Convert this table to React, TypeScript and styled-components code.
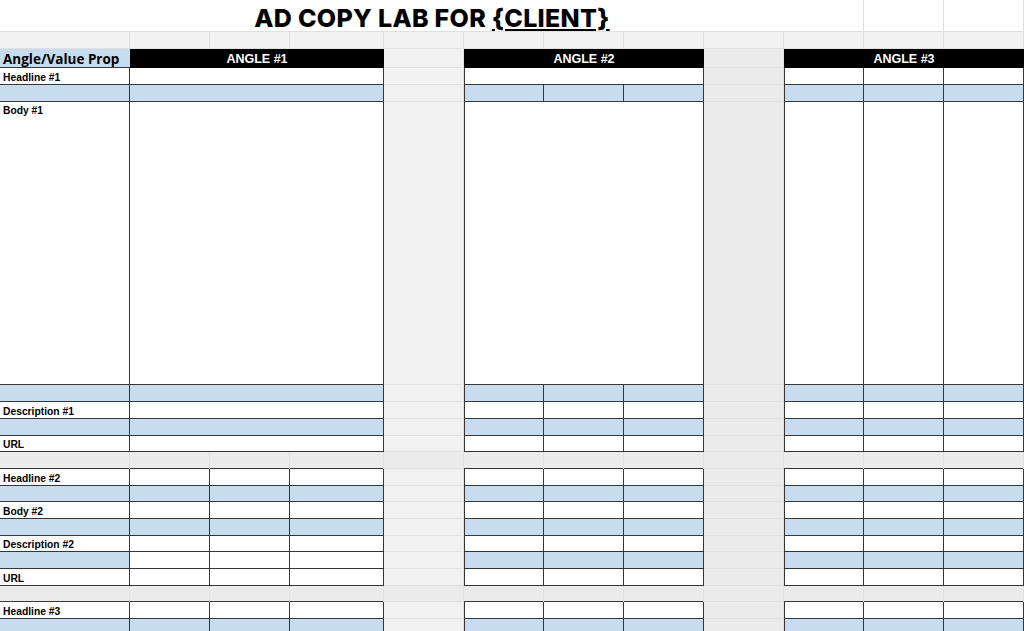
import styled, { createGlobalStyle } from "styled-components";

const GlobalStyle = createGlobalStyle`
    html, body {
        margin: 0;
        padding: 0;
        background: #fff;
        overflow: hidden;
    }
    body {
        font-family: "Liberation Sans", Arial, sans-serif;
    }
`;

const DARK = "#363636";
const LIGHT = "#e0e0e0";
const BLUE = "#c8dcf0";

// 열 너비 / 행 높이 (스프레드시트 그대로)
const COLS = [130, 80, 80, 94, 80, 80, 80, 80, 80, 80, 80, 80];
const ROWS = [
    32, 17, 19, 17, 17, 283, 17, 17, 17, 16, 17, 17, 16, 17, 17, 16, 17, 17,
    16, 17, 17,
];

const Sheet = styled.div`
    display: grid;
    grid-template-columns: ${COLS.map((c) => `${c}px`).join(" ")};
    grid-template-rows: ${ROWS.map((r) => `${r}px`).join(" ")};
    width: 1024px;
    height: 631px;
    overflow: hidden;
    background: #fff;
`;

const BaseCell = styled.div<{ $span?: number }>`
    grid-column: span ${(p) => p.$span ?? 1};
    min-width: 0;
    overflow: hidden;
    display: flex;
    align-items: center;
    box-sizing: border-box;
`;

const PlainCell = styled(BaseCell)<{ $bg?: string }>`
    background: ${(p) => p.$bg ?? "#fff"};
    box-shadow: inset -1px -1px 0 ${LIGHT};
`;

const TitleCell = styled(BaseCell)`
    justify-content: center;
    padding-top: 3px;
    box-shadow: inset -1px -1px 0 ${LIGHT};
`;

const Title = styled.h1`
    margin: 0;
    font-family: Inter, "Open Sans", sans-serif;
    font-weight: 800;
    font-size: 25px;
    letter-spacing: 0.3px;
    color: #000;
    white-space: nowrap;

    u {
        text-decoration-thickness: 1.5px;
        text-underline-offset: 2px;
    }
`;

// 앵글 헤더 (검정 바)
const HeadCell = styled(BaseCell)`
    background: #000;
    color: #fff;
    justify-content: center;
    font-size: 12.5px;
    font-weight: bold;
    padding-top: 1px;
`;

const PropCell = styled(BaseCell)`
    background: ${BLUE};
    box-shadow: inset 0 -1px 0 ${DARK};
    padding-left: 3px;
    font-family: "Open Sans", sans-serif;
    font-weight: 700;
    font-size: 13.5px;
    color: #000;
    white-space: nowrap;
`;

const LabelCell = styled(BaseCell)<{ $blue?: boolean; $top?: boolean }>`
    background: ${(p) => (p.$blue ? BLUE : "#fff")};
    box-shadow: inset -1px -1px 0 ${DARK};
    align-items: ${(p) => (p.$top ? "flex-start" : "center")};
    padding: ${(p) => (p.$top ? "3px 0 0 3px" : "1px 0 0 3px")};
    font-size: 10.3px;
    font-weight: bold;
    color: #000;
    white-space: nowrap;
`;

const TableCell = styled(BaseCell)<{ $blue?: boolean; $lead?: boolean }>`
    background: ${(p) => (p.$blue ? BLUE : "#fff")};
    box-shadow: inset -1px -1px 0 ${DARK}
        ${(p) => (p.$lead ? `, inset 1px 0 0 ${DARK}` : "")};
`;

// 세로 여백 열 (E, I)
const GapCell = styled(BaseCell)<{ $tone: "e" | "i" }>`
    background: ${(p) => (p.$tone === "e" ? "#f1f1f1" : "#ebebeb")};
    box-shadow: inset -1px -1px 0 ${LIGHT};
`;

// 가로 여백 행
const BandCell = styled(BaseCell)<{ $edge?: boolean }>`
    background: #ebebeb;
    box-shadow: inset -1px 0 0 ${LIGHT},
        inset 0 -1px 0 ${(p) => (p.$edge ? DARK : LIGHT)};
`;

type Fill = "w" | "b";
type RowSpec = {
    label?: string;
    labelFill: Fill;
    a1: Fill[];
    a2: Fill[];
    a3: Fill[];
    top?: boolean;
};

const AdRow = ({ spec }: { spec: RowSpec }) => (
    <>
        <LabelCell $blue={spec.labelFill === "b"} $top={spec.top}>
            {spec.label}
        </LabelCell>
        {spec.a1.map((f, i) => (
            <TableCell
                key={`a${i}`}
                $blue={f === "b"}
                $span={spec.a1.length === 1 ? 3 : 1}
            />
        ))}
        <GapCell $tone='e' />
        {spec.a2.map((f, i) => (
            <TableCell
                key={`b${i}`}
                $blue={f === "b"}
                $span={spec.a2.length === 1 ? 3 : 1}
                $lead={i === 0}
            />
        ))}
        <GapCell $tone='i' />
        {spec.a3.map((f, i) => (
            <TableCell key={`c${i}`} $blue={f === "b"} $lead={i === 0} />
        ))}
    </>
);

const BandRow = () => (
    <>
        {COLS.map((_, i) => (
            <BandCell key={i} $edge={i !== 4 && i !== 8} />
        ))}
    </>
);

const W3: Fill[] = ["w", "w", "w"];
const B3: Fill[] = ["b", "b", "b"];

const firstBlock: RowSpec[] = [
    { label: "Headline #1", labelFill: "w", a1: ["w"], a2: ["w"], a3: W3 },
    { labelFill: "b", a1: ["b"], a2: B3, a3: B3 },
    { label: "Body #1", labelFill: "w", a1: ["w"], a2: ["w"], a3: W3, top: true },
    { labelFill: "b", a1: ["b"], a2: B3, a3: B3 },
    { label: "Description #1", labelFill: "w", a1: ["w"], a2: W3, a3: W3 },
    { labelFill: "b", a1: ["b"], a2: B3, a3: B3 },
    { label: "URL", labelFill: "w", a1: ["w"], a2: W3, a3: W3 },
];

const secondBlock: RowSpec[] = [
    { label: "Headline #2", labelFill: "w", a1: W3, a2: W3, a3: W3 },
    { labelFill: "b", a1: B3, a2: B3, a3: B3 },
    { label: "Body #2", labelFill: "w", a1: W3, a2: W3, a3: W3 },
    { labelFill: "b", a1: B3, a2: B3, a3: B3 },
    { label: "Description #2", labelFill: "w", a1: W3, a2: W3, a3: W3 },
    { labelFill: "b", a1: W3, a2: B3, a3: B3 },
    { label: "URL", labelFill: "w", a1: W3, a2: W3, a3: W3 },
];

const thirdBlock: RowSpec[] = [
    { label: "Headline #3", labelFill: "w", a1: W3, a2: W3, a3: W3 },
    { labelFill: "b", a1: B3, a2: B3, a3: B3 },
];

const App = () => {
    return (
        <>
            <GlobalStyle />
            <Sheet>
                {/* 제목 행 */}
                <TitleCell $span={10}>
                    <Title>
                        AD COPY LAB FOR <u>{"{CLIENT}"}</u>
                    </Title>
                </TitleCell>
                <PlainCell />
                <PlainCell />

                {/* 빈 회색 행 */}
                {COLS.map((_, i) => (
                    <PlainCell key={`g${i}`} $bg='#f1f1f1' />
                ))}

                {/* 앵글 헤더 */}
                <PropCell>Angle/Value Prop</PropCell>
                <HeadCell $span={3}>ANGLE #1</HeadCell>
                <GapCell $tone='e' />
                <HeadCell $span={3}>ANGLE #2</HeadCell>
                <GapCell $tone='i' />
                <HeadCell $span={3}>ANGLE #3</HeadCell>

                {firstBlock.map((spec, i) => (
                    <AdRow key={`r1-${i}`} spec={spec} />
                ))}
                <BandRow />
                {secondBlock.map((spec, i) => (
                    <AdRow key={`r2-${i}`} spec={spec} />
                ))}
                <BandRow />
                {thirdBlock.map((spec, i) => (
                    <AdRow key={`r3-${i}`} spec={spec} />
                ))}
            </Sheet>
        </>
    );
};

export default App;
